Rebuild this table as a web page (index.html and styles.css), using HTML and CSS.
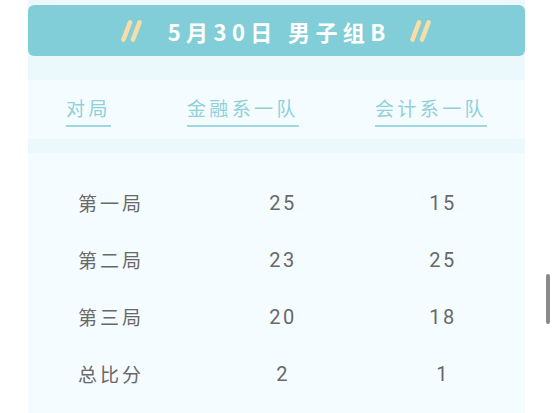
FILE: index.html
```html
<!DOCTYPE html>
<html lang="zh">
<head>
<meta charset="utf-8">
<link rel="stylesheet" href="styles.css">
</head>
<body>
<div class="card">
  <div class="title">
    <svg class="slash" width="24" height="22" viewBox="0 0 24 22"><line x1="3.5" y1="19.5" x2="10" y2="2.5"/><line x1="13" y1="19.5" x2="19.5" y2="2.5"/></svg>
    <span class="title-text">5月30日 男子组B</span>
    <svg class="slash" width="24" height="22" viewBox="0 0 24 22"><line x1="3.5" y1="19.5" x2="10" y2="2.5"/><line x1="13" y1="19.5" x2="19.5" y2="2.5"/></svg>
  </div>
  <div class="band"></div>
  <div class="thead">
    <span class="th">对局</span>
    <span class="th">金融系一队</span>
    <span class="th">会计系一队</span>
  </div>
  <div class="band band-thin"></div>
  <div class="tbody">
    <div class="row"><span class="c1">第一局</span><span class="c2">25</span><span class="c3">15</span></div>
    <div class="row"><span class="c1">第二局</span><span class="c2">23</span><span class="c3">25</span></div>
    <div class="row"><span class="c1">第三局</span><span class="c2">20</span><span class="c3">18</span></div>
    <div class="row"><span class="c1">总比分</span><span class="c2">2</span><span class="c3">1</span></div>
  </div>
</div>
<div class="scrollbar"></div>
</body>
</html>
```
FILE: styles.css
```css
html, body {
  margin: 0;
  padding: 0;
  background: #ffffff;
  height: 413px;
  overflow: hidden;
}
body {
  font-family: "Noto Sans CJK SC", "Noto Sans", sans-serif;
}
.card {
  margin-left: 28px;
  width: 497px;
  height: 413px;
  padding-top: 5px;
  box-sizing: border-box;
  background: #eef8fc;
  display: flex;
  flex-direction: column;
}
.title {
  height: 51px;
  flex: none;
  background: #82ced8;
  border-radius: 6px;
  display: flex;
  align-items: center;
  justify-content: center;
  gap: 24px;
}
.title-text {
  color: #ffffff;
  font-weight: 700;
  font-size: 22px;
  letter-spacing: 5.4px;
  line-height: 24px;
  margin-right: -5.4px;
  padding-top: 1px;
}
.slash line {
  stroke: #f8dea6;
  stroke-width: 4.6;
  stroke-linecap: round;
}
.band {
  height: 24px;
  flex: none;
  background: #ebf8fc;
}
.band-thin {
  height: 14px;
}
.thead {
  height: 59px;
  flex: none;
  box-sizing: border-box;
  padding-top: 15px;
  background: #f5fcff;
  display: flex;
  justify-content: space-around;
  align-items: flex-start;
}
.th {
  font-size: 19px;
  letter-spacing: 3.4px;
  line-height: 25px;
  color: #8fd0da;
  padding-bottom: 5px;
  border-bottom: 2px solid #9fd8e1;
}
.tbody {
  flex: 1;
  background: #f5fcff;
  padding-top: 21px;
}
.row {
  height: 57px;
  display: grid;
  grid-template-columns: 166px 178px 142px;
  align-items: center;
  font-size: 19px;
  color: #686868;
  letter-spacing: 3px;
}
.row span {
  text-align: center;
}
.c2, .c3 {
  font-family: Roboto, "Noto Sans CJK SC", sans-serif;
  font-size: 20px;
  letter-spacing: 2.5px;
}
.scrollbar {
  position: absolute;
  left: 546px;
  top: 274px;
  width: 4px;
  height: 50px;
  border-radius: 2px;
  background: #8a8a8a;
}
```
